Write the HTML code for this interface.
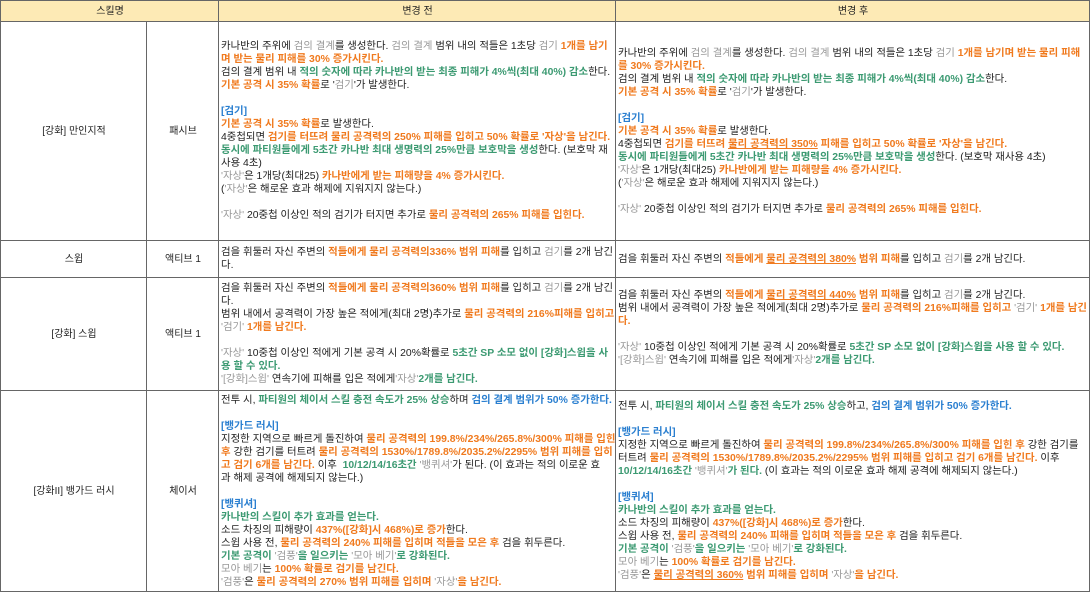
<!DOCTYPE html>
<html><head><meta charset="utf-8"><style>
body{margin:0;background:#fff;width:1090px;height:593px;overflow:hidden;font-family:"Liberation Sans","Noto Sans CJK KR",sans-serif;font-size:10.4px;color:#222}
table{border-collapse:collapse;table-layout:fixed;position:absolute;left:0;top:0;width:1089px}
td,th{border:1px solid #666;padding:0 1px 0 2px;line-height:13px;vertical-align:middle;white-space:nowrap;overflow:hidden}
th{background:#fdeab5;font-weight:normal;height:20px;text-align:center;font-size:10px}
td.c{text-align:center;font-size:10px}
.o{color:#f07a1e;font-weight:600}
.g{color:#3c9a72;font-weight:600}
.gy{color:#999;font-weight:normal}
.b{color:#2a7fd0;font-weight:600}
.u{text-decoration:underline;text-decoration-color:#f07a1e}
</style></head><body>
<table>
<colgroup><col style="width:146px"><col style="width:72px"><col style="width:397px"><col style="width:474px"></colgroup>
<tr><th colspan="2">스킬명</th><th>변경 전</th><th>변경 후</th></tr>
<tr style="height:219px"><td class="c">[강화] 만인지적</td><td class="c">패시브</td>
<td>카나반의 주위에 <span class="gy">검의 결계</span>를 생성한다. <span class="gy">검의 결계</span> 범위 내의 적들은 1초당 <span class="gy">검기</span> <span class="o">1개를 남기</span><br><span class="o">며 받는 물리 피해를 30% 증가시킨다.</span><br>검의 결계 범위 내 <span class="g">적의 숫자에 따라 카나반의 받는 최종 피해가 4%씩(최대 40%) 감소</span>한다.<br><span class="o">기본 공격 시 35% 확률</span>로 '<span class="gy">검기</span>'가 발생한다.<br><br><span class="b">[검기]</span><br><span class="o">기본 공격 시 35% 확률</span>로 발생한다.<br>4중첩되면 <span class="o">검기를 터뜨려 물리 공격력의 250% 피해를 입히고 50% 확률로 '자상'을 남긴다.</span><br><span class="g">동시에 파티원들에게 5초간 카나반 최대 생명력의 25%만큼 보호막을 생성</span>한다. (보호막 재<br>사용 4초)<br><span class="gy">'자상'</span>은 1개당(최대25) <span class="o">카나반에게 받는 피해량을 4% 증가시킨다.</span><br>(<span class="gy">'자상'</span>은 해로운 효과 해제에 지워지지 않는다.)<br><br><span class="gy">'자상'</span> 20중첩 이상인 적의 검기가 터지면 추가로 <span class="o">물리 공격력의 265% 피해를 입힌다.</span></td>
<td>카나반의 주위에 <span class="gy">검의 결계</span>를 생성한다. <span class="gy">검의 결계</span> 범위 내의 적들은 1초당 <span class="gy">검기</span> <span class="o">1개를 남기며 받는 물리 피해</span><br><span class="o">를 30% 증가시킨다.</span><br>검의 결계 범위 내 <span class="g">적의 숫자에 따라 카나반의 받는 최종 피해가 4%씩(최대 40%) 감소</span>한다.<br><span class="o">기본 공격 시 35% 확률</span>로 '<span class="gy">검기</span>'가 발생한다.<br><br><span class="b">[검기]</span><br><span class="o">기본 공격 시 35% 확률</span>로 발생한다.<br>4중첩되면 <span class="o">검기를 터뜨려 <span class="u">물리 공격력의 350%</span> 피해를 입히고 50% 확률로 '자상'을 남긴다.</span><br><span class="g">동시에 파티원들에게 5초간 카나반 최대 생명력의 25%만큼 보호막을 생성</span>한다. (보호막 재사용 4초)<br><span class="gy">'자상'</span>은 1개당(최대25) <span class="o">카나반에게 받는 피해량을 4% 증가시킨다.</span><br>(<span class="gy">'자상'</span>은 해로운 효과 해제에 지워지지 않는다.)<br><br><span class="gy">'자상'</span> 20중첩 이상인 적의 검기가 터지면 추가로 <span class="o">물리 공격력의 265% 피해를 입힌다.</span></td></tr>
<tr style="height:37px"><td class="c">스윕</td><td class="c">액티브 1</td>
<td>검을 휘둘러 자신 주변의 <span class="o">적들에게 물리 공격력의336% 범위 피해</span>를 입히고 <span class="gy">검기</span>를 2개 남긴<br>다.</td>
<td>검을 휘둘러 자신 주변의 <span class="o">적들에게 <span class="u">물리 공격력의 380%</span> 범위 피해</span>를 입히고 <span class="gy">검기</span>를 2개 남긴다.</td></tr>
<tr style="height:113px"><td class="c">[강화] 스윕</td><td class="c">액티브 1</td>
<td>검을 휘둘러 자신 주변의 <span class="o">적들에게 물리 공격력의360% 범위 피해</span>를 입히고 <span class="gy">검기</span>를 2개 남긴<br>다.<br>범위 내에서 공격력이 가장 높은 적에게(최대 2명)추가로 <span class="o">물리 공격력의 216%피해를 입히고</span><br><span class="gy">'검기'</span> <span class="o">1개를 남긴다.</span><br><br><span class="gy">'자상'</span> 10중첩 이상인 적에게 기본 공격 시 20%확률로 <span class="g">5초간 SP 소모 없이 [강화]스윕을 사</span><br><span class="g">용 할 수 있다.</span><br><span class="gy">'[강화]스윕'</span> 연속기에 피해를 입은 적에게<span class="gy">'자상'</span><span class="g">2개를 남긴다.</span></td>
<td>검을 휘둘러 자신 주변의 <span class="o">적들에게 <span class="u">물리 공격력의 440%</span> 범위 피해</span>를 입히고 <span class="gy">검기</span>를 2개 남긴다.<br>범위 내에서 공격력이 가장 높은 적에게(최대 2명)추가로 <span class="o">물리 공격력의 216%피해를 입히고</span> <span class="gy">'검기'</span> <span class="o">1개를 남긴</span><br><span class="o">다.</span><br><br><span class="gy">'자상'</span> 10중첩 이상인 적에게 기본 공격 시 20%확률로 <span class="g">5초간 SP 소모 없이 [강화]스윕을 사용 할 수 있다.</span><br><span class="gy">'[강화]스윕'</span> 연속기에 피해를 입은 적에게<span class="gy">'자상'</span><span class="g">2개를 남긴다.</span><br>&nbsp;</td></tr>
<tr style="height:201px"><td class="c">[강화II] 뱅가드 러시</td><td class="c">체이서</td>
<td>전투 시, <span class="g">파티원의 체이서 스킬 충전 속도가 25% 상승</span>하며 <span class="b">검의 결계 범위가 50% 증가한다.</span><br><br><span class="b">[뱅가드 러시]</span><br>지정한 지역으로 빠르게 돌진하여 <span class="o">물리 공격력의 199.8%/234%/265.8%/300% 피해를 입힌</span><br><span class="o">후</span> 강한 검기를 터트려 <span class="o">물리 공격력의 1530%/1789.8%/2035.2%/2295% 범위 피해를 입히</span><br><span class="o">고 검기 6개를 남긴다.</span> 이후 &nbsp;<span class="g">10/12/14/16초간</span> <span class="gy">'뱅퀴셔'</span>가 된다. (이 효과는 적의 이로운 효<br>과 해제 공격에 해제되지 않는다.)<br><br><span class="b">[뱅퀴셔]</span><br><span class="g">카나반의 스킬이 추가 효과를 얻는다.</span><br>소드 차징의 피해량이 <span class="o">437%([강화]시 468%)로 증가</span>한다.<br>스윕 사용 전, <span class="o">물리 공격력의 240% 피해를 입히며 적들을 모은 후</span> 검을 휘두른다.<br><span class="g">기본 공격이 <span class="gy">'검풍'</span>을 일으키는 <span class="gy">'모아 베기'</span>로 강화된다.</span><br><span class="gy">모아 베기</span>는 <span class="o">100% 확률로 검기를 남긴다.</span><br><span class="gy">'검풍'</span>은 <span class="o">물리 공격력의 270% 범위 피해를 입히며 <span class="gy">'자상'</span>을 남긴다.</span></td>
<td>전투 시, <span class="g">파티원의 체이서 스킬 충전 속도가 25% 상승</span>하고, <span class="b">검의 결계 범위가 50% 증가한다.</span><br><br><span class="b">[뱅가드 러시]</span><br>지정한 지역으로 빠르게 돌진하여 <span class="o">물리 공격력의 199.8%/234%/265.8%/300% 피해를 입힌 후</span> 강한 검기를<br>터트려 <span class="o">물리 공격력의 1530%/1789.8%/2035.2%/2295% 범위 피해를 입히고 검기 6개를 남긴다.</span> 이후<br><span class="g">10/12/14/16초간 <span class="gy">'뱅퀴셔'</span>가 된다.</span> (이 효과는 적의 이로운 효과 해제 공격에 해제되지 않는다.)<br><br><span class="b">[뱅퀴셔]</span><br><span class="g">카나반의 스킬이 추가 효과를 얻는다.</span><br>소드 차징의 피해량이 <span class="o">437%([강화]시 468%)로 증가</span>한다.<br>스윕 사용 전, <span class="o">물리 공격력의 240% 피해를 입히며 적들을 모은 후</span> 검을 휘두른다.<br><span class="g">기본 공격이 <span class="gy">'검풍'</span>을 일으키는 <span class="gy">'모아 베기'</span>로 강화된다.</span><br><span class="gy">모아 베기</span>는 <span class="o">100% 확률로 검기를 남긴다.</span><br><span class="gy">'검풍'</span>은 <span class="o"><span class="u">물리 공격력의 360%</span> 범위 피해를 입히며 <span class="gy">'자상'</span>을 남긴다.</span></td></tr>
</table>
</body></html>
